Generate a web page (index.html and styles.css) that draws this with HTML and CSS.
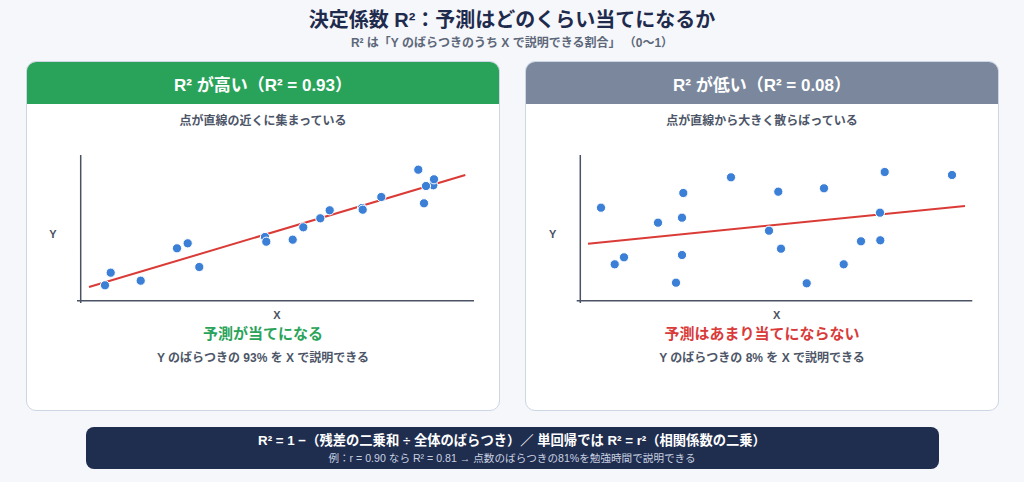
FILE: index.html
```html
<!DOCTYPE html>
<html lang="ja">
<head>
<meta charset="utf-8">
<title>決定係数 R²</title>
<link rel="stylesheet" href="styles.css">
</head>
<body>
<div class="page">
  <header class="top">
    <h1 class="title">決定係数 R²：予測はどのくらい当てになるか</h1>
    <p class="subtitle">R² は「Y のばらつきのうち X で説明できる割合」 （0〜1）</p>
  </header>

  <div class="cards">
    <section class="card">
      <div class="card-head head-high">R² が高い（R² = 0.93）</div>
      <p class="card-note">点が直線の近くに集まっている</p>
      <svg class="chart" width="472" height="192" viewBox="0 0 472 192">
        <line class="axis" x1="53.7" y1="26" x2="53.7" y2="174"/>
        <line class="axis" x1="50" y1="171.7" x2="447" y2="171.7"/>
        <text class="axis-label" x="26" y="109">Y</text>
        <text class="axis-label" x="250" y="190">X</text>
        <line class="fit" x1="62" y1="158" x2="438.3" y2="46"/>
        <g class="dots">
          <circle cx="78" cy="156.3" r="4.6"/>
          <circle cx="83.7" cy="143.7" r="4.6"/>
          <circle cx="113.7" cy="151.7" r="4.6"/>
          <circle cx="150" cy="119.3" r="4.6"/>
          <circle cx="160.7" cy="114.3" r="4.6"/>
          <circle cx="172.3" cy="138" r="4.6"/>
          <circle cx="238" cy="108" r="4.6"/>
          <circle cx="239.3" cy="112.7" r="4.6"/>
          <circle cx="265.7" cy="110.7" r="4.6"/>
          <circle cx="276.3" cy="98.3" r="4.6"/>
          <circle cx="293.3" cy="89.3" r="4.6"/>
          <circle cx="302.7" cy="81.3" r="4.6"/>
          <circle cx="335" cy="79" r="4.6"/>
          <circle cx="335.7" cy="80.7" r="4.6"/>
          <circle cx="354.3" cy="68" r="4.6"/>
          <circle cx="391.3" cy="40.7" r="4.6"/>
          <circle cx="397" cy="74.3" r="4.6"/>
          <circle cx="406.3" cy="56.3" r="4.6"/>
          <circle cx="399" cy="57" r="4.6"/>
          <circle cx="407" cy="50.3" r="4.6"/>
        </g>
      </svg>
      <p class="verdict good">予測が当てになる</p>
      <p class="explain">Y のばらつきの 93% を X で説明できる</p>
    </section>

    <section class="card">
      <div class="card-head head-low">R² が低い（R² = 0.08）</div>
      <p class="card-note">点が直線から大きく散らばっている</p>
      <svg class="chart" width="472" height="192" viewBox="0 0 472 192">
        <line class="axis" x1="54.3" y1="26" x2="54.3" y2="174"/>
        <line class="axis" x1="50.7" y1="171.7" x2="446.3" y2="171.7"/>
        <text class="axis-label" x="26.7" y="109">Y</text>
        <text class="axis-label" x="250.7" y="190">X</text>
        <line class="fit" x1="62" y1="114.7" x2="439" y2="77"/>
        <g class="dots">
          <circle cx="75" cy="78.7" r="4.6"/>
          <circle cx="88.7" cy="135.3" r="4.6"/>
          <circle cx="98" cy="128.3" r="4.6"/>
          <circle cx="132" cy="93.7" r="4.6"/>
          <circle cx="157.3" cy="64" r="4.6"/>
          <circle cx="156" cy="88.7" r="4.6"/>
          <circle cx="156" cy="126" r="4.6"/>
          <circle cx="150" cy="153.7" r="4.6"/>
          <circle cx="205" cy="48.3" r="4.6"/>
          <circle cx="243" cy="101.7" r="4.6"/>
          <circle cx="252.3" cy="62.7" r="4.6"/>
          <circle cx="255" cy="119.7" r="4.6"/>
          <circle cx="280.7" cy="154.3" r="4.6"/>
          <circle cx="298" cy="59.3" r="4.6"/>
          <circle cx="317.7" cy="135.3" r="4.6"/>
          <circle cx="335" cy="112.3" r="4.6"/>
          <circle cx="354" cy="83.7" r="4.6"/>
          <circle cx="354.3" cy="111.3" r="4.6"/>
          <circle cx="358.7" cy="43" r="4.6"/>
          <circle cx="426" cy="46" r="4.6"/>
        </g>
      </svg>
      <p class="verdict bad">予測はあまり当てにならない</p>
      <p class="explain">Y のばらつきの 8% を X で説明できる</p>
    </section>
  </div>

  <footer class="formula">
    <p class="formula-main">R² = 1 −（残差の二乗和 ÷ 全体のばらつき）／ 単回帰では R² = r²（相関係数の二乗）</p>
    <p class="formula-sub">例：r = 0.90 なら R² = 0.81 → 点数のばらつきの81%を勉強時間で説明できる</p>
  </footer>
</div>
</body>
</html>
```

FILE: styles.css
```css
* { box-sizing: border-box; }

html, body {
  margin: 0;
  padding: 0;
  background: #f5f7fb;
}

body {
  font-family: "Liberation Sans", "Noto Sans CJK JP", sans-serif;
  color: #1f2b4d;
}

.page {
  width: 1024px;
  height: 482px;
  padding-top: 7px;
}

.top {
  text-align: center;
}

.title {
  margin: 0;
  font-size: 20px;
  line-height: 26px;
  font-weight: 700;
  color: #1f2b4d;
}

.subtitle {
  margin: 2px 0 0;
  font-size: 12px;
  line-height: 16px;
  font-weight: 700;
  color: #5d6779;
}

.cards {
  display: flex;
  gap: 25px;
  padding: 0 25px 0 26px;
  margin-top: 10px;
}

.card {
  flex: 1;
  height: 350px;
  background: #ffffff;
  border: 1px solid #cdd6e5;
  border-radius: 10px;
  overflow: hidden;
  display: flex;
  flex-direction: column;
  align-items: center;
}

.card-head {
  align-self: stretch;
  height: 42px;
  display: flex;
  align-items: center;
  justify-content: center;
  color: #ffffff;
  font-size: 17px;
  font-weight: 700;
}

.head-high { background: #2aa35a; }
.head-low { background: #7a879c; }

.card-note {
  margin: 9px 0 0;
  font-size: 12px;
  line-height: 16px;
  font-weight: 700;
  color: #4d5668;
}

.chart {
  display: block;
  align-self: stretch;
}

.axis {
  stroke: #4b5263;
  stroke-width: 1.5;
}

.axis-label {
  font-family: "Liberation Sans", sans-serif;
  font-size: 11px;
  font-weight: 700;
  fill: #4b5263;
  text-anchor: middle;
}

.fit {
  stroke: #da3b36;
  stroke-width: 2;
}

.dots circle {
  fill: #3b7fd7;
  stroke: #ffffff;
  stroke-width: 1;
}

.verdict {
  margin: 3px 0 0;
  font-size: 15px;
  line-height: 20px;
  font-weight: 700;
}

.good { color: #2aa35a; }
.bad { color: #d93a3a; }

.explain {
  margin: 6px 0 0;
  font-size: 12px;
  line-height: 16px;
  font-weight: 700;
  color: #4d5668;
}

.formula {
  width: 853px;
  height: 42px;
  margin: 16px auto 0;
  padding-top: 5px;
  background: #1f2d4f;
  border-radius: 8px;
  text-align: center;
}

.formula-main {
  margin: 0;
  font-size: 13.3px;
  line-height: 17px;
  font-weight: 700;
  color: #ffffff;
}

.formula-sub {
  margin: 2px 0 0;
  font-size: 10.6px;
  line-height: 14px;
  color: #c9d1e0;
}
```
